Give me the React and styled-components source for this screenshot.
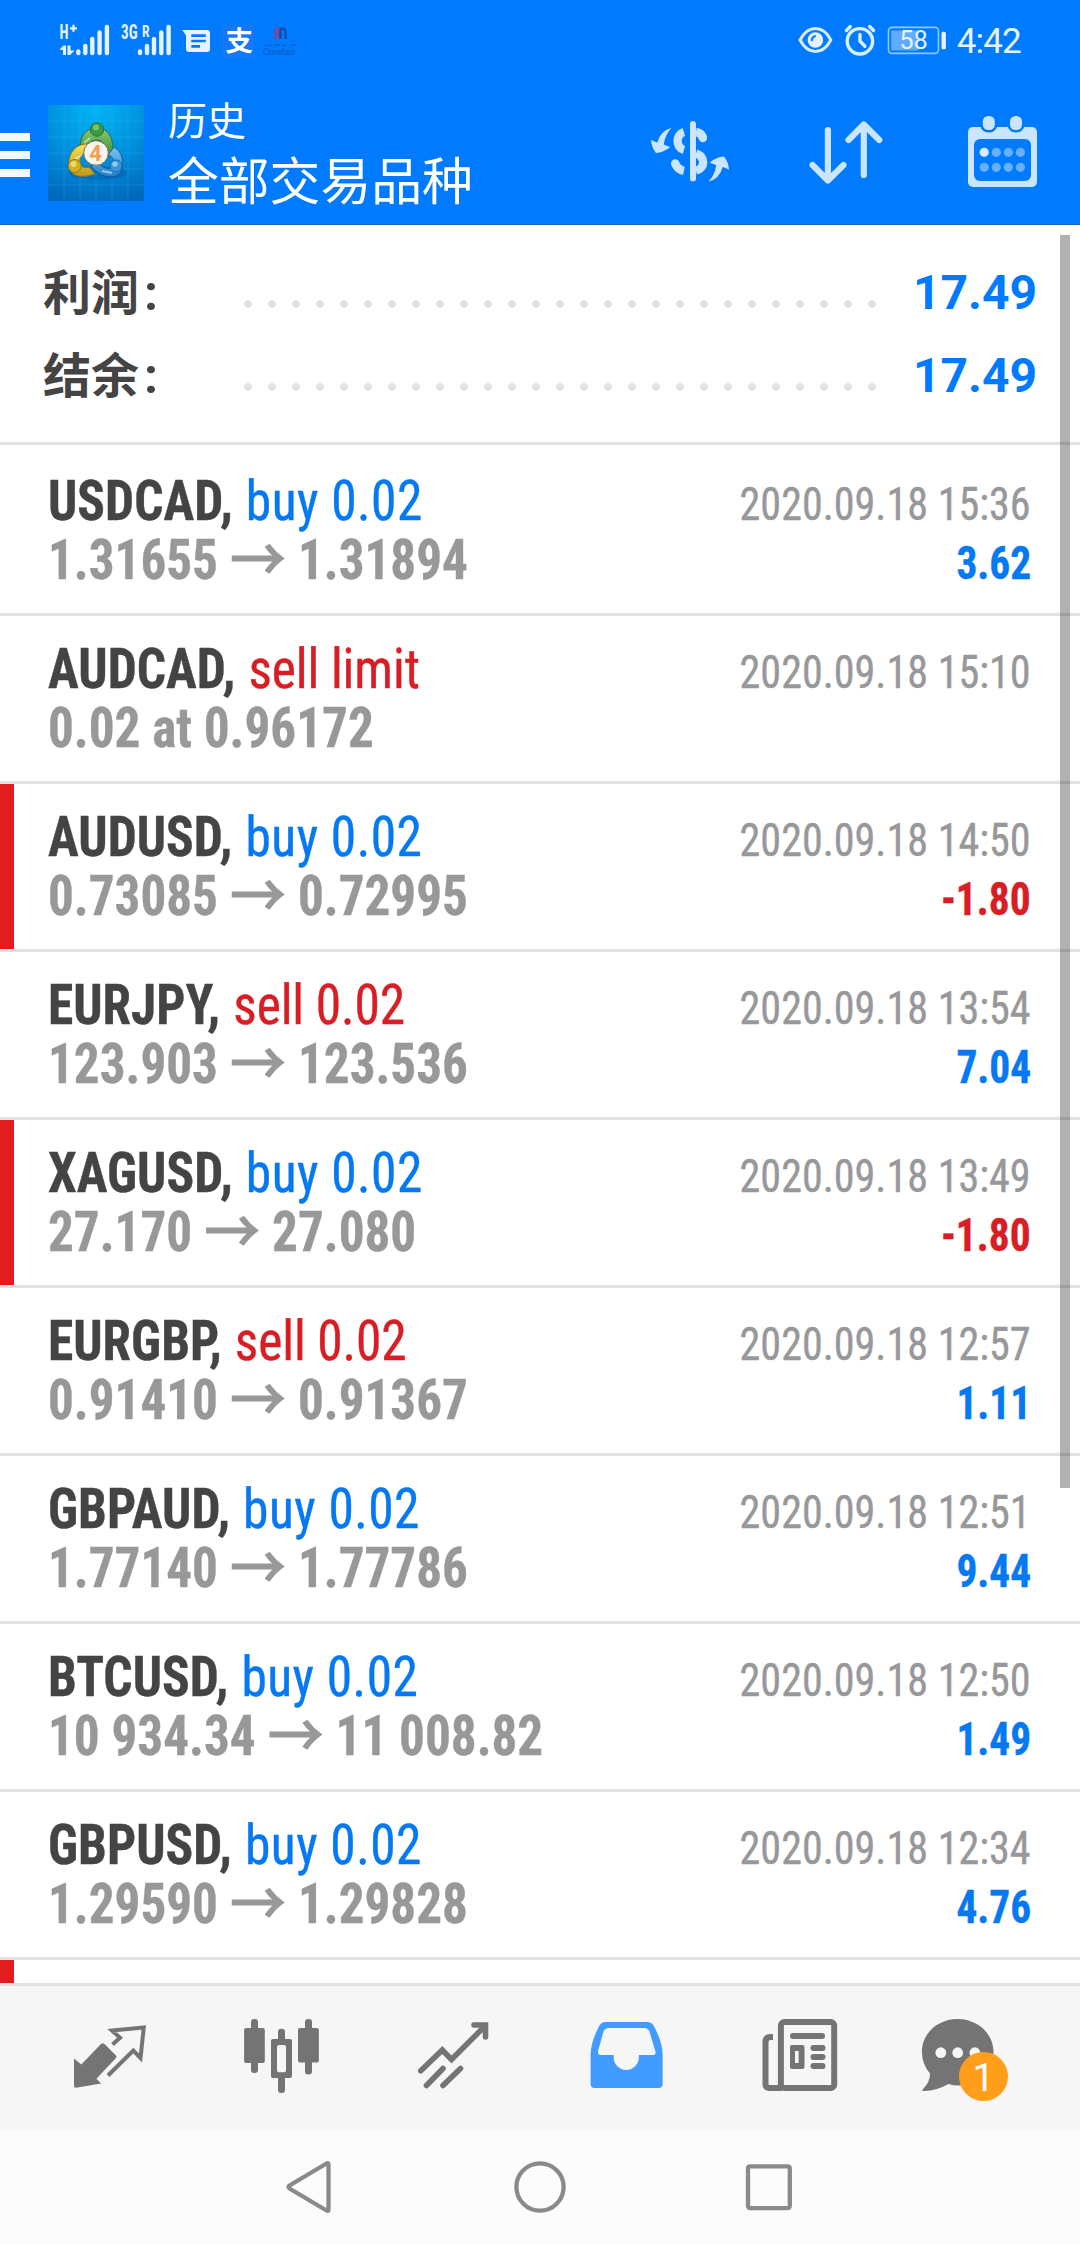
import React from 'react';
import styled, { createGlobalStyle } from 'styled-components';

const colors = {
  primary: '#007aff',
  buy: '#0579f2',
  sell: '#d81e24',
  loss: '#e11d1f',
  dark: '#444444',
  grey: '#98989a',
  line: '#e2e2e2',
  tab: '#747474',
};

const deals = [
  { symbol: 'USDCAD', side: 'buy', action: 'buy 0.02', from: '1.31655', to: '1.31894', time: '2020.09.18 15:36', profit: '3.62' },
  { symbol: 'AUDCAD', side: 'sell', action: 'sell limit', note: '0.02 at 0.96172', time: '2020.09.18 15:10' },
  { symbol: 'AUDUSD', side: 'buy', action: 'buy 0.02', from: '0.73085', to: '0.72995', time: '2020.09.18 14:50', profit: '-1.80' },
  { symbol: 'EURJPY', side: 'sell', action: 'sell 0.02', from: '123.903', to: '123.536', time: '2020.09.18 13:54', profit: '7.04' },
  { symbol: 'XAGUSD', side: 'buy', action: 'buy 0.02', from: '27.170', to: '27.080', time: '2020.09.18 13:49', profit: '-1.80' },
  { symbol: 'EURGBP', side: 'sell', action: 'sell 0.02', from: '0.91410', to: '0.91367', time: '2020.09.18 12:57', profit: '1.11' },
  { symbol: 'GBPAUD', side: 'buy', action: 'buy 0.02', from: '1.77140', to: '1.77786', time: '2020.09.18 12:51', profit: '9.44' },
  { symbol: 'BTCUSD', side: 'buy', action: 'buy 0.02', from: '10 934.34', to: '11 008.82', time: '2020.09.18 12:50', profit: '1.49' },
  { symbol: 'GBPUSD', side: 'buy', action: 'buy 0.02', from: '1.29590', to: '1.29828', time: '2020.09.18 12:34', profit: '4.76' },
];

const isLoss = deal => Boolean(deal.profit) && deal.profit.startsWith('-');

/**
 * Status bar icons
 */
const SignalBars = ({ x }) => (
  <g stroke="#e6f3ff" strokeWidth="4.4" strokeLinecap="round">
    <path d={`M${x} 31.5V33`} />
    <path d={`M${x + 7} 26V33`} />
    <path d={`M${x + 14} 19V33`} />
    <path d={`M${x + 21.3} 12.5V33`} />
    <path d={`M${x + 28.6} 7V33`} />
  </g>
);

const SignalOne = () => (
  <StatusIcon width="55">
    <text x="1.5" y="18.5" fontSize="19.5" fontWeight="700" textLength="9" lengthAdjust="spacingAndGlyphs">H</text>
    <path d="M12 8.3h7M15.5 4.8v7" stroke="#e6f3ff" strokeWidth="2.2" />
    <path d="M1.5 29.5L5.5 25.5h2.5V35H5V30zM9.5 25.5h3V30.5H16.5l-4.5 4.5h-2.5z" />
    <SignalBars x={20.3} />
  </StatusIcon>
);

const SignalTwo = () => (
  <StatusIcon width="54">
    <text x="1" y="18.5" fontSize="19.5" fontWeight="700" textLength="16.5" lengthAdjust="spacingAndGlyphs">3G</text>
    <text x="22" y="16.5" fontSize="16" fontWeight="700" textLength="7.5" lengthAdjust="spacingAndGlyphs">R</text>
    <SignalBars x={20} />
  </StatusIcon>
);

const MessageIcon = () => (
  <StatusIcon width="33">
    <path
      fillRule="evenodd"
      d="M1.3 10H26a3 3 0 0 1 3 3v16a3 3 0 0 1-3 3H8a3 3 0 0 1-3-3V15.5zM10.3 14.3v2.6h14.5v-2.6zM10.3 19.7v2.6h14.5v-2.6zM10.3 25.1v2.6h8.7v-2.6z"
    />
  </StatusIcon>
);

const AlipayIcon = () => (
  <StatusIcon width="34">
    <rect x="1" y="4.5" width="32" height="33.5" fill="#1478fa" />
    <text x="4.5" y="31" fontSize="27.5" fontWeight="700" fill="#ffffff">支</text>
  </StatusIcon>
);

const CarrefourIcon = () => (
  <StatusIcon width="36">
    <path d="M12.5 19V12q0-5 4.5-5v12z" fill="#7a4b9b" />
    <path d="M18.5 19V9q5-2 5 4v6" fill="none" stroke="#0d4fae" strokeWidth="2.5" />
    <path d="M2 25.5h7M12 25h6M20 25.5h5M28 25h6" stroke="#0764d3" strokeWidth="1.5" />
    <text x="1" y="34.5" fontSize="8.5" fill="#0757bb" textLength="32">Carrefour</text>
  </StatusIcon>
);

const EyeIcon = () => (
  <StatusIcon width="36">
    <path d="M3 20C7 12.5 12 8.5 18.4 8.5S30 12.5 33.8 20C30 27.5 25 31.5 18.4 31.5S7 27.5 3 20z" fill="none" stroke="#d9ecff" strokeWidth="3" />
    <circle cx="18.4" cy="20" r="7.8" />
    <path d="M14.8 21a4.5 4.5 0 0 1 4-5" fill="none" stroke={colors.primary} strokeWidth="2.2" />
  </StatusIcon>
);

const AlarmIcon = () => (
  <StatusIcon width="35">
    <g fill="none" stroke="#d9f0ff" strokeWidth="3.4" strokeLinecap="round" strokeLinejoin="round">
      <circle cx="16.9" cy="21.3" r="12.7" />
      <path d="M16.9 14.5V21l5 5.2M7.3 6.5L3.5 10.5M26.7 6.5l3.8 4" />
    </g>
  </StatusIcon>
);

const BatteryIcon = () => (
  <StatusIcon width="60">
    <rect x="1.5" y="7.4" width="50" height="26" rx="3.5" fill="none" stroke="#8fcaff" strokeWidth="1.6" />
    <rect x="4.2" y="10.5" width="27" height="20" fill="#5eabff" />
    <rect x="54.5" y="11.7" width="4.4" height="17.6" rx="1.5" />
    <text x="12.3" y="29.3" fontSize="25.5" fontFamily="Roboto, sans-serif" textLength="28.5">58</text>
  </StatusIcon>
);

/**
 * Toolbar icons
 */
const AppIcon = () => (
  <AppLogo viewBox="0 0 96 96">
    <defs>
      <radialGradient id="sky" cx="0.5" cy="0.05" r="1">
        <stop offset="0" stopColor="#02b4f4" />
        <stop offset="0.5" stopColor="#0091de" />
        <stop offset="1" stopColor="#0068bb" />
      </radialGradient>
      <linearGradient id="green" x1="0" y1="0" x2="0" y2="1">
        <stop offset="0" stopColor="#8cc872" />
        <stop offset="1" stopColor="#2f8a35" />
      </linearGradient>
      <linearGradient id="yellow" x1="0" y1="0" x2="0" y2="1">
        <stop offset="0" stopColor="#f2e25a" />
        <stop offset="1" stopColor="#bd9a18" />
      </linearGradient>
      <linearGradient id="blue" x1="0" y1="0" x2="0" y2="1">
        <stop offset="0" stopColor="#7cc4f0" />
        <stop offset="1" stopColor="#1f7fcb" />
      </linearGradient>
    </defs>
    <rect width="96" height="96" fill="url(#sky)" />
    <path d="M16 0V96M32 0V96M48 0V96M64 0V96M80 0V96M0 16H96M0 32H96M0 48H96M0 64H96M0 80H96" stroke="#5cc4f5" strokeWidth="0.7" opacity="0.3" />
    <ellipse cx="50" cy="68" rx="29" ry="7" fill="#004c8f" opacity="0.3" />
    <path d="M32 47C31 31 38 23 49 23S66 32 65 49L57 54C59 44 57 35 49 35S40 40 41 45z" fill="url(#green)" stroke="#2c6d3b" strokeWidth="1" />
    <path d="M41 39C29 38 20 47 21 60S35 73 47 69L41 62C34 64 31 60 32 54S37 48 42 47z" fill="url(#yellow)" stroke="#8b741a" strokeWidth="1" />
    <path d="M66 42C75 47 76 58 73 66S54 75 43 61L50 57C54 63 62 66 65 61S65 52 60 50z" fill="url(#blue)" stroke="#14599a" strokeWidth="1" />
    <path d="M36 38L42 33M26 55l8-5M54 66l10 2" stroke="#ffffff" strokeWidth="2" opacity="0.5" />
    <circle cx="49" cy="24.5" r="6.7" fill="#3b9a42" stroke="#2c6d3b" />
    <circle cx="48" cy="22.5" r="3" fill="#93d184" opacity="0.7" />
    <circle cx="26.7" cy="61" r="6.5" fill="#d3ad22" stroke="#957515" />
    <circle cx="25.5" cy="59" r="3" fill="#f5e579" opacity="0.8" />
    <circle cx="68" cy="61" r="6" fill="#3b93d8" stroke="#1b67a8" />
    <circle cx="67" cy="59" r="2.7" fill="#a3d9f7" opacity="0.8" />
    <circle cx="48" cy="48" r="12.3" fill="#f6f4f0" stroke="#776f4c" strokeWidth="1" />
    <text x="47.5" y="56" textAnchor="middle" fontFamily="Roboto, sans-serif" fontWeight="700" fontSize="22" fill="#f3a04a">4</text>
  </AppLogo>
);

const DollarIcon = () => (
  <ActionIcon>
    <path d="M48 19V73.5" stroke="#cce5ff" strokeWidth="6" strokeLinecap="round" />
    <g fill="none" stroke="#cce5ff" strokeWidth="8.4">
      <path d="M38.9 27C30.5 29.5 30.5 42.5 38.9 45" />
      <path d="M51 27Q57 28 58 33.5" />
      <path d="M51 48.5C60.5 51.5 60.5 63.5 51 65.5" />
      <path d="M30.2 58.5Q32.5 64.5 38.9 65.8" />
    </g>
    <circle cx="57.9" cy="33" r="4.2" fill="#cce5ff" />
    <circle cx="30.2" cy="58.5" r="4.2" fill="#cce5ff" />
    <path id="swap" d="M26.5 23Q15.5 25.5 12.3 37.5Q9.5 37 6 34.8Q6.5 42.5 11 48Q18.5 47.5 25.3 42Q21.5 40.5 18.8 39.5Q20 29.5 26.5 23z" fill="#cce5ff" />
    <use href="#swap" transform="rotate(180 45 49.8)" />
  </ActionIcon>
);

const SortIcon = () => (
  <ActionIcon>
    <g fill="none" stroke="#cce5ff" strokeWidth="6.2" strokeLinecap="round" strokeLinejoin="round">
      <path d="M26.9 25V74M11.5 60L26.9 75.5L42.5 60" />
      <path d="M62.8 70V20M47.5 35L62.8 19.5L78.3 35" />
    </g>
  </ActionIcon>
);

const CalendarIcon = () => (
  <ActionIcon>
    <rect x="11" y="22" width="69" height="60" rx="5" fill="#cce5ff" />
    <rect x="17" y="34" width="57" height="42" rx="6" fill={colors.primary} />
    <g fill="#cce5ff" stroke={colors.primary} strokeWidth="5" paintOrder="stroke">
      <rect x="25.8" y="11" width="12" height="14" rx="5.5" />
      <rect x="53" y="11" width="12" height="14" rx="5.5" />
    </g>
    {[47.3, 62.3].map(y => [27.2, 39.3, 51.3, 63.4].map(x => (
      <circle key={`${x}-${y}`} cx={x} cy={y} r="4.6" fill={x < 30 && y < 50 ? '#d8ebff' : '#66b0ff'} />
    )))}
  </ActionIcon>
);

/**
 * Tab bar icons
 */
const TradeIcon = () => (
  <TabIcon>
    <path d="M45.5 31.5L53 24.7L45 17.6L76.8 14.4L73.5 45L66.3 37.5L41 62.5" fill="none" stroke={colors.tab} strokeWidth="4" />
    <path d="M7 45.5L14.3 51.5L34 31Q35.6 29.5 37.5 31L49 42.5Q50 43.8 49 45L29.4 65.7L34.2 70.5L9 74.7Q7 74.7 7 72.7z" fill={colors.tab} />
  </TabIcon>
);

const ChartIcon = () => (
  <TabIcon>
    <g fill={colors.tab}>
      <rect x="12" y="6" width="7" height="54" rx="3.3" />
      <rect x="5.1" y="15" width="20.7" height="35" rx="2" />
      <rect x="66" y="6" width="7" height="55.5" rx="3.3" />
      <rect x="59" y="15" width="20.9" height="34.5" rx="2" />
      <rect x="39" y="15.7" width="7" height="64.3" rx="3.3" />
      <rect x="32" y="26" width="21" height="39" rx="2" />
    </g>
    <rect x="38" y="32" width="9" height="27.3" rx="2" fill="#f6f6f6" />
  </TabIcon>
);

const TrendIcon = () => (
  <TabIcon>
    <g fill="none" stroke={colors.tab} strokeWidth="5.6" strokeLinecap="round">
      <path d="M9.8 57.7L31.3 37L40.5 46.5L74 13" />
      <path d="M63 12H74.5V24" />
      <path d="M15.5 72.5L32 55.5M32 72.5L49.5 55.5" />
    </g>
  </TabIcon>
);

const InboxIcon = () => (
  <TabIcon>
    <path
      fill="#429bff"
      fillRule="evenodd"
      d="M22.5 9H64.5Q68.5 9 70.5 12.5Q79.6 29 79.6 42V71Q79.6 75 75.6 75H11.6Q7.6 75 7.6 71V42Q7.6 29 16.5 12.5Q18.5 9 22.5 9zM26 15Q22 15 20.5 18.5L15.2 37.5Q14 42 18 42H30.7V44.5A12.55 12.55 0 0 0 55.8 44.5V42H69.5Q73.5 42 72.3 38L66.5 18.5Q65 15 61 15z"
    />
  </TabIcon>
);

const NewsIcon = () => (
  <TabIcon>
    <g fill="none" stroke={colors.tab} strokeWidth="6">
      <rect x="25.9" y="9" width="53.3" height="66" rx="3.5" />
      <path d="M18 24H15.5Q10.5 24 10.5 29V71Q10.5 75 14.5 75H27" />
      <path d="M38 23H67M58.5 35H67.5M58.5 44H67.5M58.5 53H67.5" strokeLinecap="round" />
    </g>
    <path fill={colors.tab} fillRule="evenodd" d="M37 32H47.5Q49.5 32 49.5 34V54Q49.5 56 47.5 56H37Q35 56 35 54V34Q35 32 37 32zM40 38V50H43.6V38z" />
  </TabIcon>
);

const ChatIcon = () => (
  <TabIcon>
    <path
      fill={colors.tab}
      d="M30.7 6C51 6 66.5 21 66.5 39S51 72.5 32 72.5Q26 72.5 21.5 71Q8 78.5-4 78Q-5.5 77 -3.5 75.5Q3 69 3 60.5Q-5.1 51 -5.1 39C-5.1 21 10 6 30.7 6z"
    />
    <g fill="#f6f6f6">
      <circle cx="13.8" cy="39.7" r="5.4" />
      <circle cx="30.7" cy="39.7" r="5.4" />
      <circle cx="47.9" cy="39.7" r="5.4" />
    </g>
  </TabIcon>
);

const Deal = ({ deal }) => (
  <DealRow $loss={isLoss(deal)}>
    <Line>
      <Title>
        <span>{deal.symbol},</span>
        <Action $side={deal.side}>{deal.action}</Action>
      </Title>
      <Time>{deal.time}</Time>
    </Line>
    <Line>
      <Price>
        {deal.note || <>{deal.from}<Arrow>→</Arrow>{deal.to}</>}
      </Price>
      {deal.profit && <Profit $loss={isLoss(deal)}>{deal.profit}</Profit>}
    </Line>
  </DealRow>
);

const SummaryLine = ({ label, value }) => (
  <SummaryRow>
    <SummaryLabel>{label}<Colon>:</Colon></SummaryLabel>
    <Dots />
    <SummaryValue>{value}</SummaryValue>
  </SummaryRow>
);

const App = () => (
  <Screen>
    <GlobalStyle />
    <Header>
      <StatusBar>
        <StatusGroup $gap="7px">
          <SignalOne />
          <SignalTwo />
          <MessageIcon />
          <AlipayIcon />
          <CarrefourIcon />
        </StatusGroup>
        <StatusGroup $gap="9.5px">
          <EyeIcon />
          <AlarmIcon />
          <BatteryIcon />
          <Clock>4:42</Clock>
        </StatusGroup>
      </StatusBar>
      <Toolbar>
        <MenuButton><i /><i /><i /></MenuButton>
        <AppIcon />
        <Heading>
          <Section>历史</Section>
          <Filter>全部交易品种</Filter>
        </Heading>
        <Actions>
          <DollarIcon />
          <SortIcon />
          <CalendarIcon />
        </Actions>
      </Toolbar>
    </Header>
    <Content>
      <Summary>
        <SummaryLine label="利润" value="17.49" />
        <SummaryLine label="结余" value="17.49" />
      </Summary>
      <List>
        {deals.map(deal => <Deal key={deal.time} deal={deal} />)}
        <DealRow $loss />
      </List>
      <Scrollbar />
    </Content>
    <TabBar>
      <Tab><TradeIcon /></Tab>
      <Tab><ChartIcon /></Tab>
      <Tab><TrendIcon /></Tab>
      <Tab><InboxIcon /></Tab>
      <Tab><NewsIcon /></Tab>
      <Tab><ChatIcon /><Badge>1</Badge></Tab>
    </TabBar>
    <SystemNav>
      <NavButton>
        <NavIcon><path d="M48.5 8.5Q50.5 7.3 50.5 9.5V54.5Q50.5 56.7 48.5 55.5L11.5 33.5Q9.5 32 11.5 30.5z" /></NavIcon>
      </NavButton>
      <NavButton>
        <NavIcon><circle cx="32" cy="32" r="23.6" /></NavIcon>
      </NavButton>
      <NavButton>
        <NavIcon><rect x="10" y="11.3" width="41.8" height="41.8" rx="2" /></NavIcon>
      </NavButton>
    </SystemNav>
  </Screen>
);

export default App;

/**
 * Styles
 */
const GlobalStyle = createGlobalStyle`
  * {
    box-sizing: border-box;
  }
  body {
    margin: 0;
    font-family: Roboto, "Noto Sans CJK SC", sans-serif;
  }
`;

const Screen = styled.div`
  display: flex;
  flex-direction: column;
  width: 1080px;
  height: 2244px;
  background-color: #ffffff;
  overflow: hidden;
`;

const Header = styled.header`
  height: 225px;
  background-color: ${colors.primary};
  border-bottom: 1px solid #1767bb;
`;

const StatusBar = styled.div`
  display: flex;
  justify-content: space-between;
  height: 80px;
  padding: 20px 59px 0 58px;
`;

const StatusGroup = styled.div`
  display: flex;
  gap: ${props => props.$gap};
`;

const StatusIcon = styled.svg.attrs({ height: 40 })`
  display: block;
  overflow: visible;
  fill: #e6f3ff;
  font-family: "Roboto Condensed", Roboto, "Noto Sans CJK SC", sans-serif;
`;

const Clock = styled.span`
  color: #e8f4ff;
  font-size: 35px;
  line-height: 43px;
  letter-spacing: -0.8px;
`;

const Toolbar = styled.div`
  display: flex;
  align-items: flex-start;
  padding: 25px 33px 0 0;
`;

const MenuButton = styled.div`
  display: flex;
  flex-direction: column;
  gap: 10px;
  width: 30px;
  margin: 28px 18px 0 0;
  i {
    height: 8px;
    background-color: #f2f9ff;
  }
`;

const AppLogo = styled.svg`
  width: 96px;
  height: 96px;
`;

const Heading = styled.div`
  flex: 1;
  margin: -9px 0 0 24px;
  color: #ffffff;
  font-family: "Noto Sans CJK SC", sans-serif;
`;

const Section = styled.div`
  font-size: 39px;
  line-height: 45px;
`;

const Filter = styled.div`
  font-size: 50.8px;
  line-height: 75px;
`;

const Actions = styled.div`
  display: flex;
  gap: 66px;
`;

const ActionIcon = styled.svg.attrs({ viewBox: '0 0 90 90' })`
  width: 90px;
  height: 90px;
`;

const Content = styled.main`
  position: relative;
  flex: 1;
  overflow: hidden;
`;

const Summary = styled.section`
  height: 220px;
  padding: 22px 43px 0;
  border-bottom: 3px solid ${colors.line};
`;

const SummaryRow = styled.div`
  display: flex;
  align-items: baseline;
  height: 83px;
  line-height: 83px;
  font-size: 48px;
  font-weight: 700;
`;

const SummaryLabel = styled.span`
  width: 193px;
  color: ${colors.dark};
  font-family: "Noto Sans CJK SC", sans-serif;
  line-height: 83px;
  transform: translateY(1px);
`;

const Colon = styled.span`
  margin-left: 5px;
  font-family: Roboto, sans-serif;
  font-size: 50px;
  line-height: 0;
`;

const Dots = styled.span`
  align-self: stretch;
  width: 648px;
  background: radial-gradient(circle at 12px 57px, #e2e2e2 3.4px, transparent 4.3px) 0 0 / 24px 83px;
`;

const SummaryValue = styled.span`
  margin-left: auto;
  color: ${colors.primary};
`;

const List = styled.section`
  padding-top: 3px;
  font-family: "Roboto Condensed", Roboto, sans-serif;
`;

const DealRow = styled.article`
  height: 168px;
  padding: 24px 49px 0 48px;
  border-bottom: 3px solid ${colors.line};
  background: ${props => (props.$loss ? `linear-gradient(${colors.loss}, ${colors.loss}) 0 0 / 14px 165px no-repeat` : 'none')};
`;

const Line = styled.div`
  display: flex;
  justify-content: space-between;
  align-items: baseline;
  height: 59px;
  line-height: 59px;
  white-space: nowrap;
  -webkit-text-stroke-width: 0.4px;
`;

const Title = styled.span`
  display: flex;
  gap: 14px;
  color: ${colors.dark};
  font-size: 55px;
  font-weight: 700;
  transform: scaleX(0.935);
  transform-origin: left;
`;

const Action = styled.span`
  color: ${props => colors[props.$side]};
  font-weight: 400;
  letter-spacing: ${props => (props.$side === 'sell' ? '-0.1px' : '0.5px')};
`;

const Price = styled.span`
  color: ${colors.grey};
  font-size: 55px;
  font-weight: 700;
  transform: scaleX(0.93);
  transform-origin: left;
`;

const Arrow = styled.span`
  display: inline-block;
  width: 86px;
  font-family: "Noto Sans CJK SC", sans-serif;
  font-size: 60px;
  font-weight: 500;
  line-height: 0;
  text-align: center;
  -webkit-text-stroke: 1px ${colors.grey};
  transform: translateY(3px);
`;

const Time = styled.span`
  color: ${colors.grey};
  font-size: 45.5px;
  transform: scaleX(0.925);
  transform-origin: right;
`;

const Profit = styled.span`
  color: ${props => (props.$loss ? colors.sell : colors.buy)};
  font-size: 45.5px;
  font-weight: 700;
  transform: scaleX(0.91);
  transform-origin: right;
`;

const Scrollbar = styled.div`
  position: absolute;
  top: 10px;
  right: 10px;
  width: 10px;
  height: 1253px;
  background-color: rgba(0, 0, 0, 0.3);
`;

const TabBar = styled.nav`
  display: flex;
  height: 147px;
  padding: 27px 24px 0;
  border-top: 3px solid ${colors.line};
  background-color: #f6f6f6;
`;

const Tab = styled.div`
  position: relative;
  width: 172px;
  height: 86px;
  padding: 0 43px;
`;

const TabIcon = styled.svg.attrs({ viewBox: '0 0 86 86' })`
  display: block;
  width: 86px;
  height: 86px;
  overflow: visible;
`;

const Badge = styled.span`
  position: absolute;
  top: 39px;
  left: 75px;
  width: 49px;
  height: 49px;
  border-radius: 50%;
  background-color: #ff9e1b;
  color: #ffffff;
  font-size: 39px;
  line-height: 52px;
  text-align: center;
`;

const SystemNav = styled.div`
  display: flex;
  justify-content: center;
  height: 114px;
  background-color: #fcfcfc;
`;

const NavButton = styled.div`
  display: flex;
  justify-content: center;
  align-items: center;
  width: 230px;
`;

const NavIcon = styled.svg.attrs({ viewBox: '0 0 64 64' })`
  width: 64px;
  height: 64px;
  fill: none;
  stroke: #8a8a8a;
  stroke-width: 4.3px;
`;
